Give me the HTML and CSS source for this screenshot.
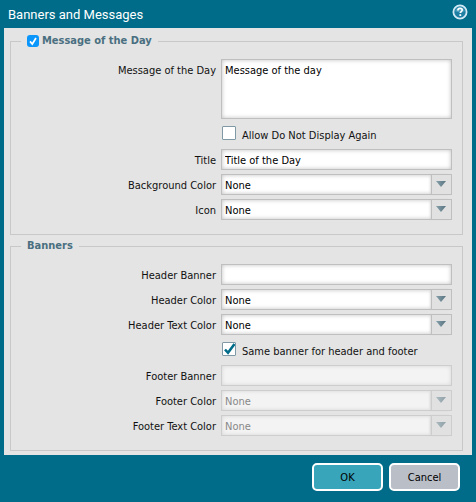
FILE: index.html
```html
<!DOCTYPE html>
<html lang="en">
<head>
    <meta charset="UTF-8">
    <meta name="viewport" content="width=device-width, initial-scale=1.0">
    <title>Banners and Messages</title>
    <link rel="stylesheet" href="styles.css">
</head>
<body>

    <form class="dialog">
        <header class="dialog-header">
            <h1>Banners and Messages</h1>
            <button type="button" class="help-btn" aria-label="Help">
                <svg width="16" height="16" viewBox="0 0 16 16">
                    <circle cx="8" cy="8" r="6.6" fill="#1d7fa3" stroke="#d3e9f5" stroke-width="1.8"/>
                    <path d="M3.2 7.2a4.9 4.9 0 0 1 9.6 0q-4.8 2-9.6 0z" fill="#4a9dbb"/>
                    <path d="M5.9 6.5c0-2.8 4.3-2.7 4.3-.4 0 1.5-1.9 1.5-1.9 3" fill="none" stroke="#fff" stroke-width="1.7"/>
                    <rect x="7.4" y="10.2" width="1.8" height="1.8" fill="#fff"/>
                </svg>
            </button>
        </header>

        <div class="dialog-body">
            <fieldset>
                <legend>
                    <input type="checkbox" id="motdEnabled" class="legend-check" checked>
                    <label for="motdEnabled">Message of the Day</label>
                </legend>

                <div class="form-row">
                    <label class="row-label" for="message">Message of the Day</label>
                    <textarea id="message" name="message" class="field">Message of the day</textarea>
                </div>

                <div class="form-row check-row">
                    <input type="checkbox" id="allowHide" name="allowHide">
                    <label for="allowHide">Allow Do Not Display Again</label>
                </div>

                <div class="form-row">
                    <label class="row-label" for="title">Title</label>
                    <input type="text" id="title" name="title" class="field" value="Title of the Day">
                </div>

                <div class="form-row">
                    <label class="row-label" for="bgColor">Background Color</label>
                    <div class="select">
                        <select id="bgColor" name="bgColor" class="field"><option>None</option></select>
                        <span class="arrow"></span>
                    </div>
                </div>

                <div class="form-row">
                    <label class="row-label" for="icon">Icon</label>
                    <div class="select">
                        <select id="icon" name="icon" class="field"><option>None</option></select>
                        <span class="arrow"></span>
                    </div>
                </div>
            </fieldset>

            <fieldset>
                <legend>Banners</legend>

                <div class="form-row">
                    <label class="row-label" for="headerBanner">Header Banner</label>
                    <input type="text" id="headerBanner" name="headerBanner" class="field">
                </div>

                <div class="form-row">
                    <label class="row-label" for="headerColor">Header Color</label>
                    <div class="select">
                        <select id="headerColor" name="headerColor" class="field"><option>None</option></select>
                        <span class="arrow"></span>
                    </div>
                </div>

                <div class="form-row">
                    <label class="row-label" for="headerTextColor">Header Text Color</label>
                    <div class="select">
                        <select id="headerTextColor" name="headerTextColor" class="field"><option>None</option></select>
                        <span class="arrow"></span>
                    </div>
                </div>

                <div class="form-row check-row">
                    <input type="checkbox" id="sameBanner" name="sameBanner" checked>
                    <label for="sameBanner">Same banner for header and footer</label>
                </div>

                <div class="form-row">
                    <label class="row-label" for="footerBanner">Footer Banner</label>
                    <input type="text" id="footerBanner" name="footerBanner" class="field" disabled>
                </div>

                <div class="form-row">
                    <label class="row-label" for="footerColor">Footer Color</label>
                    <div class="select disabled">
                        <select id="footerColor" name="footerColor" class="field" disabled><option>None</option></select>
                        <span class="arrow"></span>
                    </div>
                </div>

                <div class="form-row">
                    <label class="row-label" for="footerTextColor">Footer Text Color</label>
                    <div class="select disabled">
                        <select id="footerTextColor" name="footerTextColor" class="field" disabled><option>None</option></select>
                        <span class="arrow"></span>
                    </div>
                </div>
            </fieldset>
        </div>

        <footer class="dialog-footer">
            <button type="submit" class="btn btn-ok">OK</button>
            <button type="button" class="btn btn-cancel">Cancel</button>
        </footer>
    </form>

</body>
</html>
```
FILE: styles.css
```css
* {
    box-sizing: border-box;
}

body {
    margin: 0;
    background-color: #006c89;
    color: #111;
    font-family: "DejaVu Sans Condensed", "Noto Sans", sans-serif;
    font-size: 11px;
}

input, textarea, select, button {
    margin: 0;
    font-family: inherit;
    font-size: inherit;
}

.dialog-header {
    display: flex;
    align-items: center;
    justify-content: space-between;
    height: 28px;
    padding: 0 8px;
}

h1 {
    margin: 0;
    color: white;
    font-family: "Roboto", sans-serif;
    font-size: 13px;
    font-weight: normal;
}

.help-btn {
    width: 16px;
    height: 16px;
    margin-bottom: 4px;
    padding: 0;
    border: none;
    background: none;
    cursor: pointer;
}

.help-btn svg {
    display: block;
}

.dialog-body {
    display: flex;
    flex-direction: column;
    gap: 4px;
    margin: 0 4px;
    padding: 6px 9px 4px 6px;
    background-color: #e4e4e4;
}

fieldset {
    display: flex;
    flex-direction: column;
    gap: 4px;
    min-width: 0;
    margin: 0;
    padding: 11px 10px 14px 0;
    border: 1px solid #c8c8c8;
}

legend {
    display: flex;
    align-items: center;
    gap: 3px;
    height: 14px;
    margin-left: 10px;
    padding: 0 6px;
    color: #4a6f80;
    font-weight: bold;
    line-height: 16px;
}

.form-row {
    display: flex;
    align-items: flex-start;
    gap: 5px;
}

.row-label {
    flex: 0 0 205px;
    padding-top: 2px;
    text-align: right;
    line-height: 19px;
}

.field {
    flex: 1;
    width: 100%;
    min-width: 0;
    height: 21px;
    padding: 2px 3px 0;
    border: 1px solid #bfbfbf;
    border-radius: 0;
    background-color: white;
    box-shadow: inset 0 0 4px rgba(0, 0, 0, 0.25);
    color: #000;
}

textarea.field {
    height: 60px;
    padding: 4px 3px;
    line-height: 14px;
    resize: none;
}

.field:disabled {
    border-color: #cdcdcd;
    background-color: #f3f3f3;
    box-shadow: inset 0 0 4px rgba(0, 0, 0, 0.12);
    color: #888;
    opacity: 1;
}

.select {
    position: relative;
    flex: 1;
    display: flex;
    min-width: 0;
}

select.field {
    appearance: none;
}

/* drop-down trigger drawn over the right end of the select */
.arrow {
    position: absolute;
    top: 0;
    right: 0;
    bottom: 0;
    width: 21px;
    border: 1px solid #bfbfbf;
    background-color: #e1e1e1;
    box-shadow: -2px 0 3px -2px rgba(0, 0, 0, 0.25);
    pointer-events: none;
}

.arrow::after {
    content: "";
    display: block;
    width: 10px;
    height: 6px;
    margin: 6px 0 0 4px;
    background: linear-gradient(to right, #86a0ab, #587480);
    clip-path: polygon(0 0, 100% 0, 50% 100%);
}

.disabled .arrow {
    border-color: #cdcdcd;
}

.disabled .arrow::after {
    opacity: 0.6;
}

.check-row {
    height: 22px;
    padding: 3px 0 0 211px;
    line-height: 18px;
}

input[type="checkbox"] {
    appearance: none;
    flex: none;
    width: 14px;
    height: 14px;
    border: 1px solid #7f9aa6;
    border-radius: 1px;
    background: white center / 14px 14px no-repeat;
}

.check-row label {
    padding: 1px 0 0 1px;
}

.check-row input:checked {
    background-image: url("data:image/svg+xml,%3Csvg xmlns='http://www.w3.org/2000/svg' viewBox='0 0 14 14'%3E%3Cpath d='M3 7.5l3 3.3L12.5 2' fill='none' stroke='%23006c89' stroke-width='2.6'/%3E%3C/svg%3E");
}

input.legend-check {
    width: 12px;
    height: 12px;
    border: none;
    border-radius: 3px;
}

.legend-check:checked {
    background-color: #0b96fb;
    background-image: url("data:image/svg+xml,%3Csvg xmlns='http://www.w3.org/2000/svg' viewBox='0 0 14 14'%3E%3Cpath d='M4 7.4l2.3 2.6L10 4' fill='none' stroke='white' stroke-width='1.7'/%3E%3C/svg%3E");
}

.dialog-footer {
    display: flex;
    justify-content: flex-end;
    gap: 6px;
    padding: 8px 16px 11px;
}

.btn {
    width: 71px;
    height: 28px;
    padding: 1px 0 0;
    border: 2px solid white;
    border-radius: 5px;
    color: #000;
    cursor: pointer;
}

.btn-ok {
    background-color: #38a5ba;
}

.btn-cancel {
    background-color: #babec7;
}
```
